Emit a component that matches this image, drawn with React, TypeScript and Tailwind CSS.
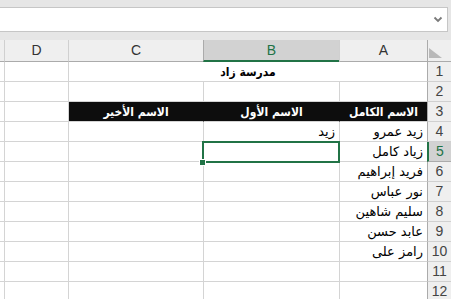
import React from 'react';

const names = ['زيد عمرو', 'زياد كامل', 'فريد إبراهيم', 'نور عباس', 'سليم شاهين', 'عابد حسن', 'رامز على'];

const arabic = { fontFamily: '"DejaVu Sans", sans-serif' };
const arabicBold = { fontFamily: '"DejaVu Sans Condensed", "DejaVu Sans", sans-serif' };

function RowHeader({ n, active }: { n: number; active?: boolean }) {
  return (
    <div
      className={`w-[24px] shrink-0 flex items-center justify-center text-[14px] border-b ${
        active
          ? 'bg-[#d2d2d2] text-[#217346] border-b-[#ababab] border-l-2 border-l-[#217346]'
          : 'bg-[#efefef] text-[#444] border-b-[#d0d0d0] border-l border-l-[#ababab]'
      }`}
      style={{ fontFamily: '"Liberation Sans", sans-serif' }}
    >
      {n}
    </div>
  );
}

function Cell({
  w,
  children,
  className = '',
  bold,
}: {
  w: string;
  children?: React.ReactNode;
  className?: string;
  bold?: boolean;
}) {
  return (
    <div
      className={`${w} shrink-0 h-full border-l border-b border-[#d4d4d4] flex items-center px-[4px] whitespace-nowrap overflow-hidden ${
        bold ? 'text-[12px] font-bold' : 'text-[13px]'
      } ${className}`}
      style={bold ? arabicBold : arabic}
    >
      {children}
    </div>
  );
}

export default function App() {
  const rows = Array.from({ length: 12 }, (_, i) => i + 1);

  return (
    <div className="w-[451px] h-[299px] overflow-hidden bg-white relative select-none">
      {/* formula bar */}
      <div className="h-[40px] bg-[#e6e6e6] pt-[7px]">
        <div className="ml-[-10px] w-[458px] h-[25px] bg-white border border-[#c6c6c6] flex items-center justify-end pr-[4px]">
          <svg width="10" height="7" viewBox="0 0 10 7">
            <path d="M1.5 1.5 L5 5 L8.5 1.5" stroke="#7a7a7a" strokeWidth="1.8" fill="none" />
          </svg>
        </div>
      </div>

      {/* sheet */}
      <div dir="rtl" className="flex flex-col">
        {/* column headers */}
        <div className="flex h-[22px]" style={{ fontFamily: '"Liberation Sans", sans-serif' }}>
          <div className="w-[24px] shrink-0 bg-[#efefef] border-b border-[#ababab] border-l border-l-[#ababab] relative">
            <svg className="absolute left-[1px] top-[8px]" width="14" height="11" viewBox="0 0 14 11">
              <polygon points="0,0 0,10 13,10" fill="#b9b9b9" />
            </svg>
          </div>
          <div className="w-[88px] shrink-0 bg-[#efefef] border-b border-[#ababab] border-l border-l-[#d0d0d0] flex items-center justify-center text-[14px] text-[#333]">A</div>
          <div className="w-[136px] shrink-0 bg-[#d2d2d2] border-b-2 border-[#217346] border-l border-l-[#ababab] flex items-center justify-center text-[14px] text-[#217346]">B</div>
          <div className="w-[135px] shrink-0 bg-[#efefef] border-b border-[#ababab] border-l border-l-[#d0d0d0] flex items-center justify-center text-[14px] text-[#333]">C</div>
          <div className="w-[64px] shrink-0 bg-[#efefef] border-b border-[#ababab] border-l border-l-[#d0d0d0] flex items-center justify-center text-[14px] text-[#333]">D</div>
          <div className="flex-1 bg-[#efefef] border-b border-[#ababab]" />
        </div>

        {rows.map((r) => (
          <div key={r} className="flex h-[20px]">
            <RowHeader n={r} active={r === 5} />
            {r === 1 ? (
              <Cell w="w-[359px]" bold className="justify-center">مدرسة زاد</Cell>
            ) : r === 3 ? (
              <>
                <Cell w="w-[88px]" bold className="justify-center bg-[#0d0d0d] text-white border-l-[#0d0d0d]">الاسم الكامل</Cell>
                <Cell w="w-[136px]" bold className="justify-center bg-[#0d0d0d] text-white border-l-[#0d0d0d]">الاسم الأول</Cell>
                <Cell w="w-[135px]" bold className="justify-center bg-[#0d0d0d] text-white">الاسم الأخير</Cell>
              </>
            ) : (
              <>
                <Cell w="w-[88px]">{r >= 4 && r <= 10 ? names[r - 4] : null}</Cell>
                <Cell w="w-[136px]">{r === 4 ? 'زيد' : null}</Cell>
                <Cell w="w-[135px]" />
              </>
            )}
            <Cell w="w-[64px]" />
            <div className="flex-1 border-b border-[#d4d4d4]" />
          </div>
        ))}
      </div>

      {/* active cell B5 */}
      <div className="absolute left-[202px] top-[141px] w-[138px] h-[22px] border-2 border-[#217346] pointer-events-none" />
      <div className="absolute left-[199px] top-[159px] w-[7px] h-[7px] bg-[#217346] border border-white pointer-events-none" />
    </div>
  );
}
